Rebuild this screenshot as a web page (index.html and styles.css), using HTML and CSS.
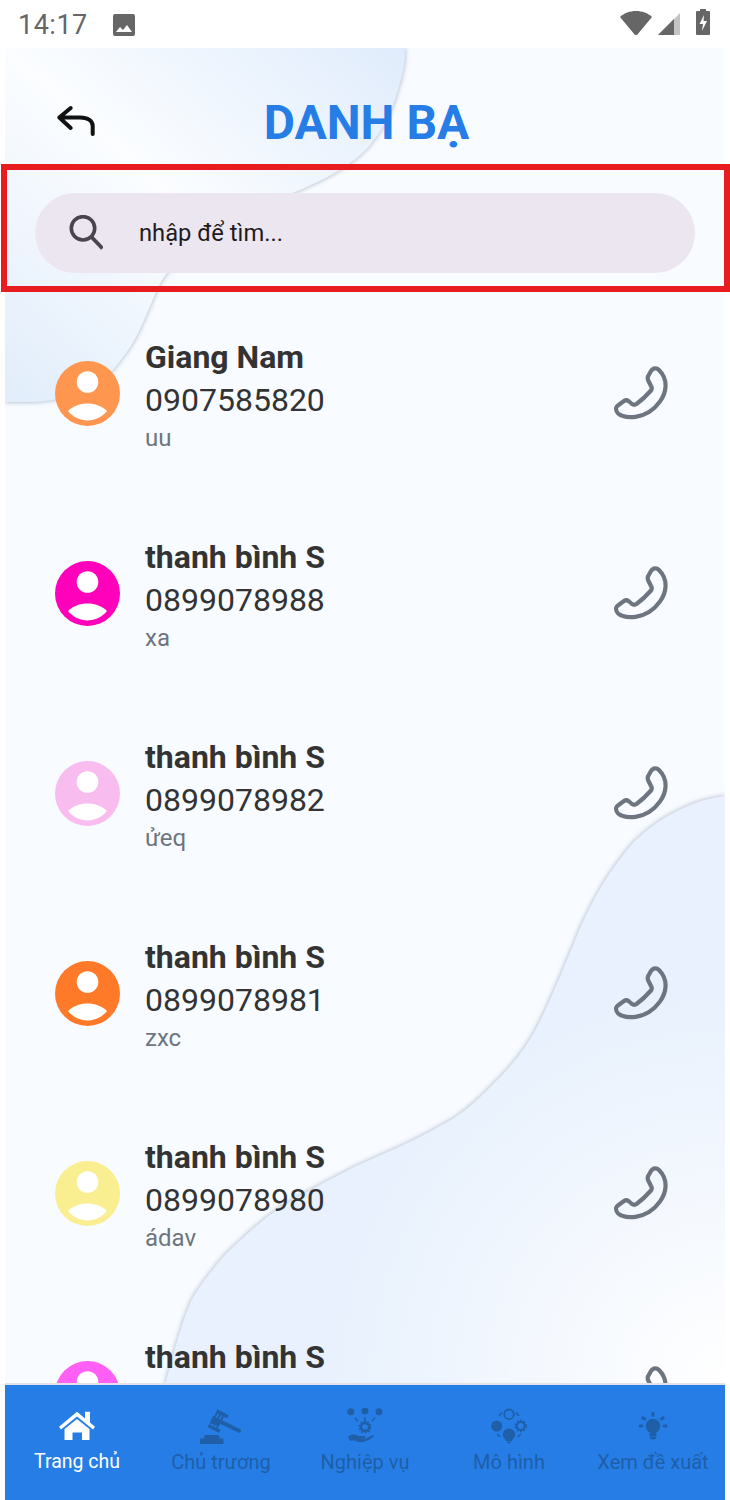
FILE: index.html
```html
<!DOCTYPE html>
<html lang="vi">
<head>
  <meta charset="UTF-8" />
  <meta name="viewport" content="width=device-width, initial-scale=1" />
  <title>Danh bạ</title>
  <link rel="stylesheet" href="styles.css">
</head>
<body>
  <svg class="defs" width="0" height="0">
    <symbol id="person" viewBox="0 0 65 65">
      <circle cx="32.500" cy="21" r="10.800" fill="#fff"/>
      <path fill="#fff" d="M13 50C18 45 25 42.500 32.500 42.500S47 45 52 50C47 56 40 59.500 32.500 59.500S18 56 13 50z"/>
    </symbol>
    <symbol id="phone" viewBox="0 0 54 54">
      <path fill="none" stroke="#6d7580" stroke-width="4.200" stroke-linejoin="round" d="M40 2.500C42 2 44 3 45 4 49 8 52 14 51.500 21 51 31 43 41 35 46 27 51 16 52.500 9 50 5 49 2 46 2 42.500 2 41 3 40 4.500 39L10 35C11.500 34 13 34 14.500 35L18 38C19.500 39 21 39 22.500 38 28 34 33 29 37 24.500 38 23 38 21.500 37 20L34 14C33.500 12.500 33.500 11 34.500 9.500L37 5C38 3.500 39 3 40 2.500z"/>
    </symbol>
  </svg>

  <div class="statusbar">
    <div class="status-left">
      <span class="clock">14:17</span>
      <svg viewBox="0 0 24 24" width="24" height="24"><path fill="#666" d="M3 1h18a2 2 0 0 1 2 2v18a2 2 0 0 1-2 2H3a2 2 0 0 1-2-2V3a2 2 0 0 1 2-2zm1 18h16l-5-7-4 5-3-3z"/></svg>
    </div>
    <div class="status-right">
      <svg viewBox="0 0 32 26" width="32" height="26"><path fill="#666" d="M0 7C4 3 10 1 16 1s12 2 16 6L17 25h-2z"/></svg>
      <svg viewBox="0 0 22 22" width="22" height="22" class="signal"><path fill="#c4c4c4" d="M22 0v22H0z"/><path fill="#666" d="M16 6v16H0z"/></svg>
      <svg viewBox="0 0 14 26" width="14" height="26" class="battery"><path fill="#666" d="M4 0h6v2h3a1 1 0 0 1 1 1v22a1 1 0 0 1-1 1H1a1 1 0 0 1-1-1V3a1 1 0 0 1 1-1h3z"/><path fill="#fff" d="M8 6 3.500 15H7l-1 7 5-10H7.500z"/></svg>
    </div>
  </div>

  <div class="screen">
    <svg class="bg" viewBox="0 0 720 1337" width="720" height="1337">
      <defs>
        <linearGradient id="blob1" x1="1" y1="0" x2="0" y2="1">
          <stop offset="0" stop-color="#e0ecfc"/>
          <stop offset="0.5" stop-color="#fbfdff"/>
          <stop offset="1" stop-color="#e1edfb"/>
        </linearGradient>
        <radialGradient id="fade" gradientUnits="userSpaceOnUse" cx="720" cy="1337" r="400">
          <stop offset="0" stop-color="#fff" stop-opacity="1"/>
          <stop offset="1" stop-color="#fff" stop-opacity="0"/>
        </radialGradient>
        <filter id="soft" x="-5%" y="-5%" width="110%" height="110%">
          <feDropShadow dx="0" dy="0" stdDeviation="2.500" flood-color="#8b9bb0" flood-opacity="0.8"/>
        </filter>
      </defs>
      <path filter="url(#soft)" fill="url(#blob1)" d="M0 0H400C400 14 398 25 395 35 390 52 386 66 378 79 368 95 358 106 345 115 330 126 313 134 295 142 245 160 195 190 162 225 152 238 150 248 142 265 135 282 128 297 118 309 110 320 103 328 95 335 85 342 75 346 62 349 50 352 40 353 28 354H0z"/>
      <path filter="url(#soft)" fill="#e8f1fd" d="M720 748C685 752 650 772 626 797 605 822 590 847 575 880 562 912 548 947 533 977 520 1002 505 1020 489 1035 470 1055 455 1068 435 1078 405 1095 375 1107 345 1121 320 1134 295 1147 273 1161 253 1175 235 1192 219 1208 205 1224 195 1238 187 1251 178 1270 170 1300 160 1337H720z"/>
      <path fill="url(#fade)" d="M720 748C685 752 650 772 626 797 605 822 590 847 575 880 562 912 548 947 533 977 520 1002 505 1020 489 1035 470 1055 455 1068 435 1078 405 1095 375 1107 345 1121 320 1134 295 1147 273 1161 253 1175 235 1192 219 1208 205 1224 195 1238 187 1251 178 1270 170 1300 160 1337H720z"/>
    </svg>

    <header class="topbar">
      <button class="back" aria-label="back">
        <svg viewBox="0 0 40 34" width="40" height="34"><path fill="none" stroke="#111" stroke-width="4" stroke-linecap="round" stroke-linejoin="round" d="M14.700 4 3.300 13.500 14.700 24M3.300 13.500H24C32 13.500 36.700 17 36.700 22V30"/></svg>
      </button>
      <h1>DANH BẠ</h1>
    </header>

    <div class="search-wrap">
      <div class="search">
        <svg viewBox="0 0 36 36" width="36" height="36"><circle cx="16" cy="13.300" r="11.700" fill="none" stroke="#49454f" stroke-width="3.600"/><path stroke="#49454f" stroke-width="3.800" d="M24.500 22 35.500 33.500"/></svg>
        <span>nhập để tìm...</span>
      </div>
    </div>

    <ul class="contacts">
      <li class="contact">
        <svg class="avatar"><circle cx="32.500" cy="32.500" r="32.500" fill="#ff9650"/><use href="#person"/></svg>
        <div class="info"><div class="name">Giang Nam</div><div class="phone">0907585820</div><div class="note">uu</div></div>
        <svg class="call"><use href="#phone"/></svg>
      </li>
      <li class="contact">
        <svg class="avatar"><circle cx="32.500" cy="32.500" r="32.500" fill="#ff00bb"/><use href="#person"/></svg>
        <div class="info"><div class="name">thanh bình S</div><div class="phone">0899078988</div><div class="note">xa</div></div>
        <svg class="call"><use href="#phone"/></svg>
      </li>
      <li class="contact">
        <svg class="avatar"><circle cx="32.500" cy="32.500" r="32.500" fill="#f8bcee"/><use href="#person"/></svg>
        <div class="info"><div class="name">thanh bình S</div><div class="phone">0899078982</div><div class="note">ửeq</div></div>
        <svg class="call"><use href="#phone"/></svg>
      </li>
      <li class="contact">
        <svg class="avatar"><circle cx="32.500" cy="32.500" r="32.500" fill="#ff7a28"/><use href="#person"/></svg>
        <div class="info"><div class="name">thanh bình S</div><div class="phone">0899078981</div><div class="note">zxc</div></div>
        <svg class="call"><use href="#phone"/></svg>
      </li>
      <li class="contact">
        <svg class="avatar"><circle cx="32.500" cy="32.500" r="32.500" fill="#f9ee90"/><use href="#person"/></svg>
        <div class="info"><div class="name">thanh bình S</div><div class="phone">0899078980</div><div class="note">ádav</div></div>
        <svg class="call"><use href="#phone"/></svg>
      </li>
      <li class="contact">
        <svg class="avatar"><circle cx="32.500" cy="32.500" r="32.500" fill="#ff5ff5"/><use href="#person"/></svg>
        <div class="info"><div class="name">thanh bình S</div></div>
        <svg class="call"><use href="#phone"/></svg>
      </li>
    </ul>

    <nav class="tabbar">
      <a class="tab active">
        <svg viewBox="0 0 36 36" width="36" height="36"><path fill="#fff" d="M0 18.700 18 3.700 26 10.500V3.700H31V14.500L36 18.700 34 21.500 18 8.500 2 21.500z"/><path fill="#fff" d="M18 11 30.500 21V32H23V24.500H13.500V32H5.500V21z"/></svg>
        <span>Trang chủ</span>
      </a>
      <a class="tab">
        <svg viewBox="0 0 42 36" width="42" height="36"><g fill="#1f5fa8"><path d="M0 36V30.500H3.500L5 27H18.500L20 30.500H23.500V36z"/><path d="M13 8 21 12 17.500 18 10 14z" /></g><g stroke="#1f5fa8" fill="none"><path stroke-width="3.200" d="M16.700 3 28 8.700M8.300 17.500 20 23.500"/><path stroke-width="4" stroke-linecap="round" d="M21.700 14.300 39 22.700"/><path stroke-width="6" stroke-dasharray="2 1.500" d="M15 6.500 23.500 11M11.500 13 20 18"/></g></svg>
        <span>Chủ trương</span>
      </a>
      <a class="tab">
        <svg viewBox="0 0 40 36" width="40" height="36"><g fill="#1f5fa8"><circle cx="5.700" cy="3.700" r="3.500"/><circle cx="20" cy="3" r="3.500"/><circle cx="34" cy="3.700" r="3.500"/><path d="M3 29C6 26 10 26 13 28H19C21 28 21 30.500 19 30.500H14L20 31 28 27C29 27 29 28.500 28 29 24 32 19 35 14 34 11 33 8 32 5 33z"/></g><g fill="none" stroke="#1f5fa8"><path stroke-width="1.600" d="M10 9.700 12.700 13M20 9V13M30 9.700 27 13"/><circle cx="20" cy="19" r="4" stroke-width="2.400"/><circle cx="20" cy="19" r="5.800" stroke-width="1.400" stroke-dasharray="2 1.600"/></g></svg>
        <span>Nghiệp vụ</span>
      </a>
      <a class="tab">
        <svg viewBox="0 0 36 36" width="36" height="36"><g fill="none" stroke="#1f5fa8"><circle cx="18" cy="6.300" r="4.800" stroke-width="1.800"/><circle cx="29.700" cy="18" r="4" stroke-width="2"/><circle cx="29.700" cy="18" r="5.600" stroke-width="1.400" stroke-dasharray="2 1.600"/><path stroke-width="1.500" d="M8 8 11 4.500M25 4.500 28 8M6 26 9.500 29M30 26 26.500 29"/></g><g fill="#1f5fa8"><circle cx="5.700" cy="18" r="5.500"/><path d="M18 20.500A6 6 0 0 1 22 31L21 33H15L14 31A6 6 0 0 1 18 20.500z"/><path d="M15.500 33.500H20.500L18 36z"/></g></svg>
        <span>Mô hình</span>
      </a>
      <a class="tab">
        <svg viewBox="0 0 30 36" width="30" height="36"><g fill="#1f5fa8"><circle cx="15" cy="18" r="7.300"/><path d="M11.500 25H18.500V28H11.500zM11.500 28.500H18.500C18.500 30.500 17 31.500 15 31.500S11.500 30.500 11.500 28.500z"/><rect x="13.500" y="3.700" width="3" height="5" rx="1.500"/><rect x="0.500" y="16.500" width="5" height="3" rx="1.500"/><rect x="24.500" y="16.500" width="5" height="3" rx="1.500"/><path d="M4.500 8 8.500 10.500 7 13 3 10.500zM25.500 8 21.500 10.500 23 13 27 10.500z"/></g></svg>
        <span>Xem đề xuất</span>
      </a>
    </nav>
  </div>

  <div class="highlight"></div>
</body>
</html>
```

FILE: styles.css
```css
* {
  box-sizing: border-box;
}
html, body {
  margin: 0;
  padding: 0;
}
body {
  width: 730px;
  height: 1500px;
  background: #fff;
  font-family: Roboto, "Noto Sans", sans-serif;
  overflow: hidden;
  position: relative;
}
.defs {
  position: absolute;
}
.statusbar {
  height: 48px;
  padding: 9px 20px 0 18px;
  display: flex;
  justify-content: space-between;
  align-items: flex-start;
}
.status-left {
  display: flex;
  align-items: center;
  gap: 24px;
}
.clock {
  font-size: 27px;
  line-height: 32px;
  color: #666;
  letter-spacing: 0.5px;
}
.status-right {
  display: flex;
  align-items: flex-start;
  margin-top: 1px;
}
.signal {
  margin: 3px 0 0 6px;
}
.battery {
  margin: -1px 0 0 16px;
}
.screen {
  width: 720px;
  height: 1452px;
  margin-left: 5px;
  background: #f8fbff;
  position: relative;
  display: flex;
  flex-direction: column;
  overflow: hidden;
}
.bg {
  position: absolute;
  top: 0;
  left: 0;
}
.topbar {
  position: relative;
  height: 116px;
  display: flex;
  align-items: center;
  justify-content: center;
  flex-shrink: 0;
}
.back {
  position: absolute;
  left: 51px;
  top: 56px;
  padding: 0;
  border: 0;
  background: none;
  line-height: 0;
}
h1 {
  margin: 0;
  padding: 34px 0 0 3px;
  font-size: 48px;
  line-height: 48px;
  font-weight: 700;
  color: #267de6;
}
.search-wrap {
  padding: 29px 30px 0;
  position: relative;
  flex-shrink: 0;
}
.search {
  height: 80px;
  border-radius: 40px;
  background: #ece6f1;
  display: flex;
  align-items: center;
  padding-left: 32px;
  gap: 36px;
  font-size: 23.700px;
  color: #1d1b20;
}
.contacts {
  list-style: none;
  margin: 20px 0 0;
  padding: 0;
  position: relative;
  flex: 1;
  min-height: 0;
  overflow: hidden;
}
.contact {
  height: 200px;
  padding: 0 57px 0 50px;
  display: flex;
  align-items: center;
}
.avatar {
  width: 65px;
  height: 65px;
  flex-shrink: 0;
}
.info {
  margin: 4px 0 0 25px;
  min-height: 120px;
  flex: 1;
}
.name {
  font-size: 32px;
  line-height: 44px;
  font-weight: 700;
  color: #333;
}
.phone {
  font-size: 32px;
  line-height: 43px;
  color: #333;
}
.note {
  font-size: 24px;
  line-height: 33px;
  color: #6d7580;
}
.call {
  width: 54px;
  height: 54px;
  flex-shrink: 0;
}
.tabbar {
  height: 117px;
  background: #267de6;
  border-top: 2px solid #e2e2e2;
  display: flex;
  position: relative;
  flex-shrink: 0;
}
.tab {
  width: 144px;
  padding-top: 23px;
  display: flex;
  flex-direction: column;
  align-items: center;
  font-size: 20px;
  color: #1f5fa8;
}
.tab span {
  margin-top: 6px;
  white-space: nowrap;
}
.tab.active {
  color: #fff;
  font-size: 19.500px;
}
.highlight {
  position: absolute;
  left: 1px;
  top: 164px;
  width: 729px;
  height: 128px;
  border: 6px solid #e81c1f;
}
```
